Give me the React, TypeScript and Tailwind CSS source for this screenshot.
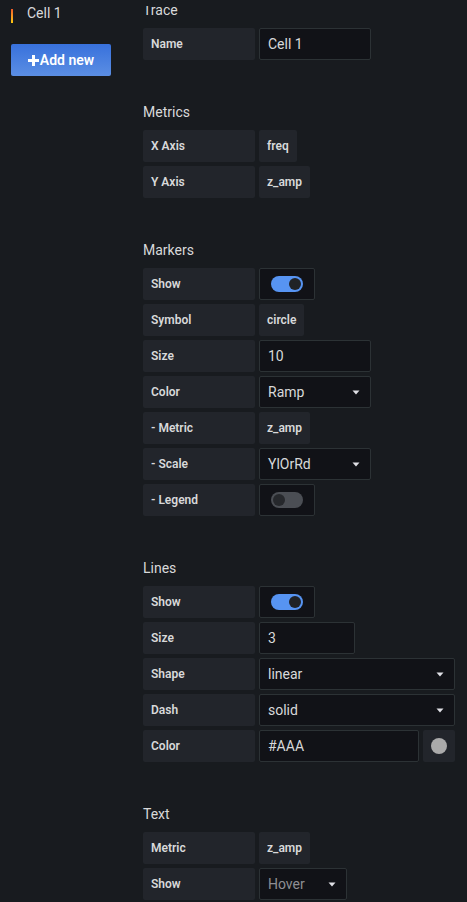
import React from "react";

const Label = ({ children }: { children: React.ReactNode }) => (
  <div className="w-[112px] h-8 shrink-0 bg-[#22252b] rounded-[2px] px-2 flex items-center text-[12px] font-semibold text-[#d8d9da]">
    {children}
  </div>
);

const ReadOnly = ({ children }: { children: React.ReactNode }) => (
  <div className="h-8 bg-[#22252b] rounded-[2px] px-2 flex items-center text-[12px] font-semibold text-[#d8d9da]">
    {children}
  </div>
);

const Input = ({ value, w }: { value: string; w: string }) => (
  <div className={`${w} h-8 bg-[#111217] border border-[#2c3235] rounded-[2px] px-2 flex items-center text-[14px] text-[#d8d9da]`}>
    {value}
  </div>
);

const Caret = () => (
  <svg width="8" height="5" viewBox="0 0 8 5" className="shrink-0">
    <path d="M0.5 0.5 L7.5 0.5 L4 4.5 Z" fill="#e0e0e6" />
  </svg>
);

const Select = ({ value, w, muted }: { value: string; w: string; muted?: boolean }) => (
  <div className={`${w} h-8 bg-[#111217] border border-[#2c3235] rounded-[2px] pl-2 pr-[10px] flex items-center justify-between text-[14px] ${muted ? "text-[#8e8e93]" : "text-[#d8d9da]"}`}>
    <span>{value}</span>
    <Caret />
  </div>
);

const Toggle = ({ on }: { on: boolean }) => (
  <div className="w-14 h-8 bg-[#111217] border border-[#2c3235] rounded-[2px] flex items-center justify-center">
    <div className={`w-8 h-4 rounded-full flex items-center px-[2px] ${on ? "bg-[#5794f2] justify-end" : "bg-[#4b4e54] justify-start"}`}>
      <div className={`w-3 h-3 rounded-full ${on ? "bg-[#202226]" : "bg-[#26282c]"}`} />
    </div>
  </div>
);

const Row = ({ label, children }: { label: string; children: React.ReactNode }) => (
  <div className="flex gap-1">
    <Label>{label}</Label>
    {children}
  </div>
);

const Section = ({ title, children }: { title: string; children: React.ReactNode }) => (
  <div className="mb-[42px]">
    <div className="h-5 leading-5 text-[14px] text-[#d8d9da] mb-2">{title}</div>
    <div className="flex flex-col gap-1">{children}</div>
  </div>
);

export default function App() {
  return (
    <div
      className="relative w-[467px] h-[902px] overflow-hidden bg-[#181b1f] flex"
      style={{ fontFamily: "Roboto, 'Liberation Sans', sans-serif" }}
    >
      <div className="absolute top-0 left-0 right-0 h-[6px] bg-[#181b1f] z-10" />
      <div className="w-[143px] shrink-0 pl-[11px]">
        <div className="flex items-center h-[14px] mt-[9px]">
          <div className="w-[2px] h-[14px] bg-gradient-to-b from-[#f05a28] to-[#fbca0a]" />
          <span className="ml-[14px] text-[14px] leading-[14px] text-[#d8d9da] -mt-[6px]">Cell 1</span>
        </div>
        <div className="mt-[21px] w-[100px] h-8 rounded-[2px] bg-gradient-to-b from-[#3871dc] to-[#5b8ee3] flex items-center justify-center text-white text-[14px] font-semibold">
          <svg width="11" height="11" viewBox="0 0 11 11" className="mr-[1px]">
            <rect x="4" y="0" width="3" height="11" fill="white" />
            <rect x="0" y="4" width="11" height="3" fill="white" />
          </svg>
          Add new
        </div>
      </div>
      <div className="flex-1">
        <Section title="Trace">
          <Row label="Name">
            <Input value="Cell 1" w="w-[112px]" />
          </Row>
        </Section>
        <Section title="Metrics">
          <Row label="X Axis">
            <ReadOnly>freq</ReadOnly>
          </Row>
          <Row label="Y Axis">
            <ReadOnly>z_amp</ReadOnly>
          </Row>
        </Section>
        <Section title="Markers">
          <Row label="Show">
            <Toggle on />
          </Row>
          <Row label="Symbol">
            <ReadOnly>circle</ReadOnly>
          </Row>
          <Row label="Size">
            <Input value="10" w="w-[112px]" />
          </Row>
          <Row label="Color">
            <Select value="Ramp" w="w-[112px]" />
          </Row>
          <Row label="- Metric">
            <ReadOnly>z_amp</ReadOnly>
          </Row>
          <Row label="- Scale">
            <Select value="YlOrRd" w="w-[112px]" />
          </Row>
          <Row label="- Legend">
            <Toggle on={false} />
          </Row>
        </Section>
        <Section title="Lines">
          <Row label="Show">
            <Toggle on />
          </Row>
          <Row label="Size">
            <Input value="3" w="w-[96px]" />
          </Row>
          <Row label="Shape">
            <Select value="linear" w="w-[196px]" />
          </Row>
          <Row label="Dash">
            <Select value="solid" w="w-[196px]" />
          </Row>
          <Row label="Color">
            <Input value="#AAA" w="w-[160px]" />
            <div className="w-8 h-8 bg-[#22252b] rounded-[2px] flex items-center justify-center">
              <div className="w-4 h-4 rounded-full bg-[#aaaaaa]" />
            </div>
          </Row>
        </Section>
        <Section title="Text">
          <Row label="Metric">
            <ReadOnly>z_amp</ReadOnly>
          </Row>
          <Row label="Show">
            <Select value="Hover" w="w-[88px]" muted />
          </Row>
        </Section>
      </div>
    </div>
  );
}
